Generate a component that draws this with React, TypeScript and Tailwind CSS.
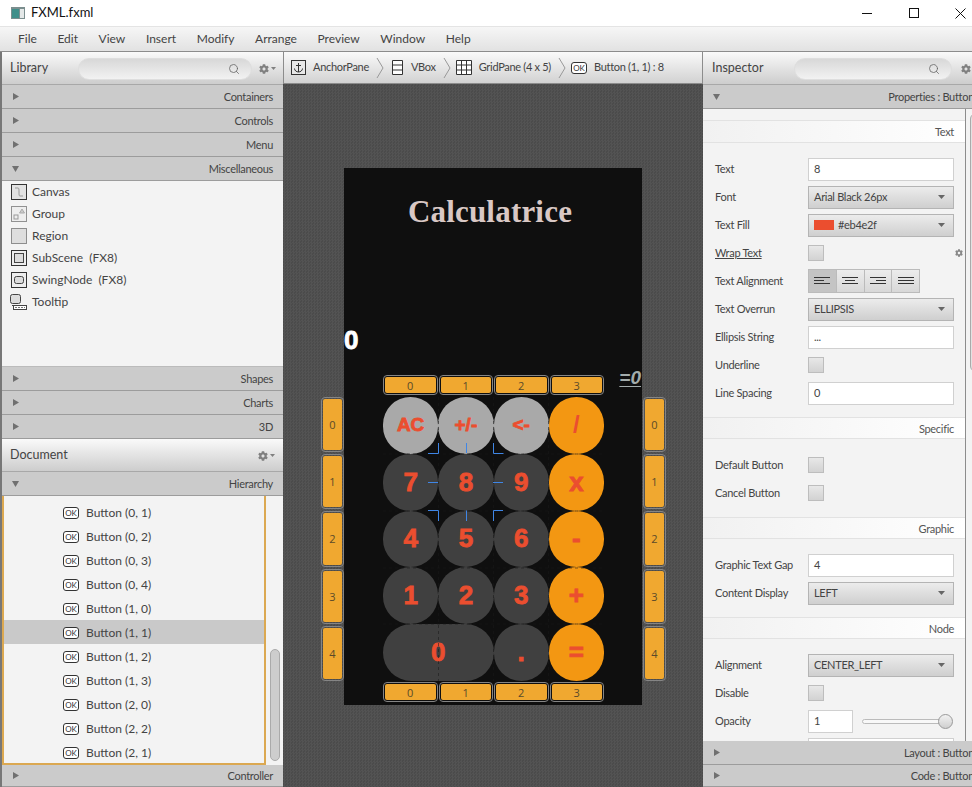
import { Search } from 'lucide-react'
import { FaCog } from 'react-icons/fa'
import type { ReactNode } from 'react'

const buttons = [
  { label: 'AC', kind: 'light', size: 'text-[19px]' },
  { label: '+/-', kind: 'light', size: 'text-[19px]' },
  { label: '<-', kind: 'light', size: 'text-[19px]' },
  { label: '/', kind: 'op', size: 'text-[24px]' },
  { label: '7', kind: 'dark', size: 'text-[26px]' },
  { label: '8', kind: 'dark', size: 'text-[26px]' },
  { label: '9', kind: 'dark', size: 'text-[26px]' },
  { label: 'x', kind: 'op', size: 'text-[26px]' },
  { label: '4', kind: 'dark', size: 'text-[26px]' },
  { label: '5', kind: 'dark', size: 'text-[26px]' },
  { label: '6', kind: 'dark', size: 'text-[26px]' },
  { label: '-', kind: 'op', size: 'text-[26px]' },
  { label: '1', kind: 'dark', size: 'text-[26px]' },
  { label: '2', kind: 'dark', size: 'text-[26px]' },
  { label: '3', kind: 'dark', size: 'text-[26px]' },
  { label: '+', kind: 'op', size: 'text-[26px]' },
  { label: '0', kind: 'wide', size: 'text-[26px]' },
  { label: '.', kind: 'dark', size: 'text-[26px]' },
  { label: '=', kind: 'op', size: 'text-[26px]' },
]

const treeRows = [
  'Button (0, 1)',
  'Button (0, 2)',
  'Button (0, 3)',
  'Button (0, 4)',
  'Button (1, 0)',
  'Button (1, 1)',
  'Button (1, 2)',
  'Button (1, 3)',
  'Button (2, 0)',
  'Button (2, 2)',
  'Button (2, 1)',
]

function Arrow({ open }: { open?: boolean }) {
  return (
    <svg width="7" height="7" viewBox="0 0 7 7" className="shrink-0">
      <path d={open ? 'M0 1h7L3.5 7z' : 'M1 0l6 3.5L1 7z'} fill="#707070" />
    </svg>
  )
}

function AccRow({ title, open, h = 'h-6', pr = 'pr-[10px]' }: { title: ReactNode; open?: boolean; h?: string; pr?: string }) {
  return (
    <div className={'flex shrink-0 items-center justify-between pl-[10px] bg-[#cbcbcb] border-b border-[#9c9c9c] text-[#444] ' + pr + ' ' + h}>
      <Arrow open={open} />
      <span className="whitespace-nowrap pt-[2px]">{title}</span>
    </div>
  )
}

function Gear() {
  return (
    <div className="flex items-center gap-[2px] text-[#808080]">
      <FaCog size={10} />
      <svg width="5" height="3" viewBox="0 0 5 3">
        <path d="M0 0h5L2.5 3z" fill="#808080" />
      </svg>
    </div>
  )
}

function SearchBox({ width }: { width: string }) {
  return (
    <div className={'flex h-[22px] items-center justify-end pr-[11px] rounded-full border border-[#dedede] bg-gradient-to-b from-[#d8d8d8] to-[#f2f2f2] ' + width}>
      <Search size={12} color="#666" strokeWidth={1.6} />
    </div>
  )
}

function PanelHeader({ children }: { children: ReactNode }) {
  return (
    <div className="flex h-[33px] shrink-0 items-center bg-gradient-to-b from-[#fafafa] to-[#cdcdcd] border-b border-[#a8a8a8] pt-[1px] text-[12.5px] tracking-normal text-[#444]">
      {children}
    </div>
  )
}

function OkIcon() {
  return (
    <span className="flex h-[12px] w-[16px] shrink-0 items-center justify-center rounded-[3px] border border-[#333] bg-white text-[8px] leading-none tracking-normal text-[#333]">
      OK
    </span>
  )
}

function LibIcon({ name }: { name: string }) {
  if (name === 'Canvas')
    return (
      <svg width="16" height="16" viewBox="0 0 16 16">
        <rect x="0.5" y="0.5" width="15" height="15" fill="#e2e2e2" stroke="#333" />
        <path d="M4 4h3c1 0 1 1 1 4s0 4 1 4h3" fill="none" stroke="#999" />
      </svg>
    )
  if (name === 'Group')
    return (
      <svg width="16" height="16" viewBox="0 0 16 16">
        <rect x="0.5" y="0.5" width="15" height="15" fill="#eee" stroke="#333" strokeDasharray="1 1" />
        <rect x="3" y="9" width="4" height="4" fill="none" stroke="#999" />
        <path d="M8.5 7l2.5-4 2.5 4z" fill="#ccc" stroke="#aaa" />
      </svg>
    )
  if (name === 'Region')
    return (
      <svg width="16" height="16" viewBox="0 0 16 16">
        <rect x="0.5" y="0.5" width="15" height="15" fill="#dedede" stroke="#333" strokeDasharray="1 1" />
      </svg>
    )
  if (name === 'SubScene')
    return (
      <svg width="16" height="16" viewBox="0 0 16 16">
        <rect x="0.5" y="0.5" width="15" height="15" fill="#eee" stroke="#333" />
        <rect x="3.5" y="3.5" width="9" height="9" fill="#ddd" stroke="#444" />
      </svg>
    )
  if (name === 'SwingNode')
    return (
      <svg width="16" height="16" viewBox="0 0 16 16">
        <rect x="0.5" y="0.5" width="15" height="15" fill="#eee" stroke="#333" />
        <rect x="3.5" y="4.5" width="9" height="7" rx="2" fill="#ddd" stroke="#444" />
      </svg>
    )
  return (
    <svg width="17" height="16" viewBox="0 0 17 16">
      <rect x="0.5" y="0.5" width="10" height="9" rx="2" fill="#ddd" stroke="#444" />
      <path d="M2 11.5h8" stroke="#444" />
      <rect x="3.5" y="11.5" width="13" height="4" fill="#fff" stroke="#444" />
      <path d="M5 13.5h10" stroke="#777" strokeDasharray="2 1" />
    </svg>
  )
}

function LibRow({ name, extra }: { name: string; extra?: string }) {
  return (
    <div className="flex h-[22px] items-center gap-[5px] pl-[8px] text-[12px] tracking-normal text-[#444]">
      <span className="flex w-[17px] justify-center">
        <LibIcon name={name} />
      </span>
      <span className="whitespace-pre">
        {name}
        {extra ? '  ' + extra : ''}
      </span>
    </div>
  )
}

function Chevron() {
  return (
    <svg width="8" height="22" viewBox="0 0 8 22" className="shrink-0">
      <path d="M1 1l6 10-6 10" fill="none" stroke="#999" />
    </svg>
  )
}

function SectionHead({ title, h = 'h-[22px]' }: { title: string; h?: string }) {
  return (
    <div className={'flex items-center justify-end pr-[11px] pt-[2px] border-y border-[#e2e2e2] bg-gradient-to-r from-[#f1f1f1] to-white text-[#555] ' + h}>
      {title}
    </div>
  )
}

function Row({ label, underline, children }: { label: string; underline?: boolean; children: ReactNode }) {
  return (
    <div className="flex h-7 items-center pl-[12px] text-[#444]">
      <span className={'w-[93px] shrink-0 whitespace-nowrap ' + (underline ? 'underline' : '')}>{label}</span>
      {children}
    </div>
  )
}

function Field({ value, width = 'w-[146px]' }: { value: string; width?: string }) {
  return (
    <div className={'flex h-[23px] items-center border border-[#d0d0d0] bg-white pl-[5px] text-[#444] ' + width}>{value}</div>
  )
}

function Combo({ children }: { children: ReactNode }) {
  return (
    <div className="flex h-[23px] w-[146px] items-center justify-between border border-[#b4b4b4] bg-gradient-to-b from-[#ececec] to-[#cfcfcf] pl-[5px] pr-[8px] text-[#444]">
      <span className="flex items-center gap-[4px]">{children}</span>
      <svg width="7" height="4" viewBox="0 0 7 4">
        <path d="M0 0h7L3.5 4z" fill="#666" />
      </svg>
    </div>
  )
}

function Check() {
  return <div className="h-4 w-4 border border-[#bdbdbd] bg-gradient-to-b from-[#e8e8e8] to-[#d2d2d2]" />
}

function AlignIcon({ lines }: { lines: [number, number][] }) {
  return (
    <svg width="16" height="8" viewBox="0 0 16 8">
      {lines.map(([x, w], i) => (
        <rect key={i} x={x} y={i * 3} width={w} height="1" fill="#333" />
      ))}
    </svg>
  )
}

function RulerCell({ label }: { label: number }) {
  return (
    <div className="flex items-center justify-center rounded-[4px] border border-[#858585] bg-[#f0a830] bg-clip-content p-[1px] font-['Open_Sans',sans-serif] text-[11px] leading-none tracking-normal text-[#5a4a2a]">
      {label}
    </div>
  )
}

function Calculator() {
  return (
    <div className="flex h-[537px] w-[298px] flex-col bg-[#0f0f0f] tracking-normal">
      <div className="flex h-[86px] shrink-0 items-center justify-center pr-[6px] pt-[2px] font-['Liberation_Serif',serif] text-[31px] font-bold tracking-[0.2px] text-[#d9c8c5]">
        Calculatrice
      </div>
      <div className="mt-[71px] flex h-[30px] shrink-0 items-center font-['Liberation_Sans',sans-serif] text-[26px] font-bold text-white [-webkit-text-stroke:0.8px_white]">
        0
      </div>
      <div className="flex h-[42px] shrink-0 justify-end pr-[1px] pt-[12px] font-['Liberation_Sans',sans-serif] text-[19px] leading-[22px] font-bold italic text-[#a3acac]">
        <span className="underline underline-offset-2">=0</span>
      </div>
      <div className="relative ml-[39px] h-[284px] w-[221px] shrink-0">
        <div className="grid h-full w-full grid-cols-4 grid-rows-5">
          {buttons.map((b) => (
            <div
              key={b.label}
              className={
                "flex items-center justify-center rounded-full font-['Liberation_Sans',sans-serif] font-bold text-[#eb4e2f] " +
                (b.label === '/' ? '' : '[-webkit-text-stroke:0.8px_#eb4e2f] ') +
                b.size +
                ' ' +
                (b.kind === 'light'
                  ? 'bg-[#a9a9a9]'
                  : b.kind === 'op'
                    ? 'bg-[#f39712]'
                    : b.kind === 'wide'
                      ? 'col-span-2 bg-[#404040]'
                      : 'bg-[#404040]')
              }
            >
              {b.label}
            </div>
          ))}
        </div>

        {/* dashed grid lines of the GridPane */}
        <svg width="221" height="284" viewBox="0 0 221 284" className="absolute left-0 top-0" fill="none" stroke="#1a1a1a" strokeOpacity="0.55" strokeDasharray="3 3">
          <path d="M55.500 0v284M110.500 0v284M165.500 0v284M0 57h221M0 114h221M0 171h221M0 227h221" />
        </svg>

        {/* selection handles */}
        <svg width="76" height="78" viewBox="0 0 76 78" className="absolute left-[45px] top-[46px]" fill="none" stroke="#3f86e6">
          <path d="M0 10.5h10.5V0M38.5 0v10M65.5 0v10.500h10M0 39.500h10M65 39.500h10M0 67.500h10.500V78M38.500 67.500V78M75 67.500H65.500V78" />
        </svg>

        <div className="absolute left-0 top-[-22px] grid h-[20px] w-[221px] grid-cols-4 gap-[1px]">
          {[0, 1, 2, 3].map((n) => (
            <RulerCell key={n} label={n} />
          ))}
        </div>
        <div className="absolute bottom-[-21px] left-0 grid h-[20px] w-[221px] grid-cols-4 gap-[1px]">
          {[0, 1, 2, 3].map((n) => (
            <RulerCell key={n} label={n} />
          ))}
        </div>
        <div className="absolute left-[-62px] top-0 grid h-[284px] w-[23px] grid-rows-5 gap-[2px]">
          {[0, 1, 2, 3, 4].map((n) => (
            <RulerCell key={n} label={n} />
          ))}
        </div>
        <div className="absolute right-[-62px] top-0 grid h-[284px] w-[23px] grid-rows-5 gap-[2px]">
          {[0, 1, 2, 3, 4].map((n) => (
            <RulerCell key={n} label={n} />
          ))}
        </div>
      </div>
    </div>
  )
}

export default function App() {
  return (
    <div className="flex h-[787px] w-[972px] flex-col overflow-hidden bg-white font-['Lato','Open_Sans',sans-serif] text-[11px] tracking-[-0.3px] text-[#333]">
      {/* title bar */}
      <div className="flex h-[27px] shrink-0 items-center border-b border-[#e4e4e4] bg-white pl-[11px] text-[13px] tracking-normal text-[#111]">
        <svg width="14" height="12" viewBox="0 0 14 12" className="mr-[6px]">
          <rect width="14" height="12" fill="#7b8e8e" />
          <rect x="1" y="2" width="7" height="9" fill="#3f8f8a" />
          <rect x="9" y="2" width="4" height="9" fill="#e4e8e8" />
        </svg>
        <span>FXML.fxml</span>
        <div className="ml-auto flex items-center pr-[6px]">
          <svg width="11" height="11" viewBox="0 0 11 11" className="mr-[36px]">
            <path d="M0 5.500h10" stroke="#111" />
          </svg>
          <svg width="11" height="11" viewBox="0 0 11 11" className="mr-[35px]">
            <rect x="0.500" y="0.500" width="9" height="9" fill="none" stroke="#111" />
          </svg>
          <svg width="11" height="11" viewBox="0 0 11 11">
            <path d="M0.500 0.500l10 10M10.500 0.500l-10 10" stroke="#111" />
          </svg>
        </div>
      </div>

      {/* menu bar */}
      <div className="flex h-[25px] shrink-0 items-center gap-[20.6px] border-b border-[#8c8c8c] bg-gradient-to-b from-[#f6f6f6] to-[#e2e2e2] pl-[18px] text-[12px] tracking-normal text-[#444]">
        {['File', 'Edit', 'View', 'Insert', 'Modify', 'Arrange', 'Preview', 'Window', 'Help'].map((m) => (
          <span key={m}>{m}</span>
        ))}
      </div>

      <div className="flex min-h-0 flex-1">
        {/* left panels */}
        <div className="flex w-[283px] shrink-0 flex-col border-l-2 border-[#777] bg-[#f3f3f3]">
          <PanelHeader>
            <span className="ml-[8px] w-[68px]">Library</span>
            <SearchBox width="w-[174px]" />
            <span className="ml-[7px]">
              <Gear />
            </span>
          </PanelHeader>
          <AccRow title="Containers" />
          <AccRow title="Controls" />
          <AccRow title="Menu" />
          <AccRow title="Miscellaneous" open />
          <div className="h-[186px] shrink-0 border-b border-[#bbb]">
            <LibRow name="Canvas" />
            <LibRow name="Group" />
            <LibRow name="Region" />
            <LibRow name="SubScene" extra="(FX8)" />
            <LibRow name="SwingNode" extra="(FX8)" />
            <LibRow name="Tooltip" />
          </div>
          <AccRow title="Shapes" />
          <AccRow title="Charts" />
          <AccRow title="3D" />
          <PanelHeader>
            <span className="ml-[8px]">Document</span>
            <span className="ml-auto mr-[8px]">
              <Gear />
            </span>
          </PanelHeader>
          <AccRow title="Hierarchy" open />
          <div className="relative flex h-[269px] shrink-0">
            <div className="h-full w-[264px] overflow-hidden border-x-2 border-b-2 border-[#dba851] pt-[4px] text-[12px] tracking-normal">
              {treeRows.map((t) => (
                <div
                  key={t}
                  className={
                    'flex h-6 items-center gap-[7px] pl-[59px] pt-[1px] text-[#444] ' +
                    (t === 'Button (1, 1)' ? 'bg-[#c9c9c9]' : '')
                  }
                >
                  <OkIcon />
                  <span>{t}</span>
                </div>
              ))}
            </div>
            <div className="absolute bottom-[4px] right-[3px] h-[112px] w-[10px] rounded-full border border-[#aaa] bg-[#cdcdcd]" />
          </div>
          <AccRow title="Controller" h="h-[22px]" />
        </div>

        {/* center */}
        <div className="flex w-[420px] shrink-0 flex-col">
          <div className="flex h-[32px] shrink-0 items-center gap-[7px] whitespace-nowrap border-x border-b border-[#8c8c8c] bg-gradient-to-b from-[#fafafa] to-[#d2d2d2] pl-[7px] text-[#444]">
            <svg width="15" height="15" viewBox="0 0 15 15" className="shrink-0">
              <rect x="0.500" y="0.500" width="14" height="14" fill="#e8e8e8" stroke="#333" />
              <path d="M7.500 3v9M5 5.500h5M3.500 8.500c0 2 2 3.500 4 3.500s4-1.500 4-3.500" fill="none" stroke="#333" />
            </svg>
            <span>AnchorPane</span>
            <Chevron />
            <svg width="11" height="15" viewBox="0 0 11 15" className="ml-[1px] mr-[1px] shrink-0">
              <path d="M0.500 0.500h10v14h-10zM0.500 5h10M0.500 10h10" fill="#fff" stroke="#333" />
            </svg>
            <span>VBox</span>
            <Chevron />
            <svg width="16" height="15" viewBox="0 0 16 15" className="ml-[-2px] shrink-0">
              <path d="M0.500 0.500h15v14h-15zM0.500 5h15M0.500 10h15M5.500 0.500v14M10.500 0.500v14" fill="#fff" stroke="#333" />
            </svg>
            <span>GridPane (4 x 5)</span>
            <Chevron />
            <span className="ml-[-2px]">
              <OkIcon />
            </span>
            <span>Button (1, 1) : 8</span>
          </div>
          <div className="min-h-0 flex-1 bg-[repeating-conic-gradient(#535353_0%_25%,#4b4b4b_0%_50%)] bg-[length:3px_3px] pl-[61px] pt-[84px]">
            <Calculator />
          </div>
        </div>

        {/* inspector */}
        <div className="flex min-w-0 flex-1 flex-col overflow-hidden bg-[#f3f3f3]">
          <div className="flex h-full w-[289px] flex-col">
            <PanelHeader>
              <span className="ml-[9px] w-[82px]">Inspector</span>
              <SearchBox width="w-[158px]" />
              <span className="ml-[9px]">
                <Gear />
              </span>
            </PanelHeader>
            <AccRow title="Properties : Button" open pr="pr-[18px]" />
            <div className="relative h-[632px] shrink-0 overflow-hidden">
              <div className="w-[263px] border-r border-[#8c8c8c] pt-[11px]">
                <SectionHead title="Text" h="h-[23px]" />
                <div className="pb-[10px] pt-[12px]">
                  <Row label="Text">
                    <Field value="8" />
                  </Row>
                  <Row label="Font">
                    <Combo>Arial Black 26px</Combo>
                  </Row>
                  <Row label="Text Fill">
                    <Combo>
                      <span className="h-[10px] w-[20px] bg-[#eb4e2f]" />
                      #eb4e2f
                    </Combo>
                  </Row>
                  <Row label="Wrap Text" underline>
                    <Check />
                    <span className="ml-auto mr-[2px] text-[#888]">
                      <FaCog size={8} />
                    </span>
                  </Row>
                  <Row label="Text Alignment">
                    <div className="flex h-6 w-[112px] border border-[#bbb] bg-gradient-to-b from-[#ececec] to-[#d8d8d8]">
                      <div className="flex flex-1 items-center justify-center border-r border-[#bbb] bg-[#c4c4c4]">
                        <AlignIcon lines={[[0, 16], [0, 10], [0, 16]]} />
                      </div>
                      <div className="flex flex-1 items-center justify-center border-r border-[#bbb]">
                        <AlignIcon lines={[[0, 16], [3, 10], [0, 16]]} />
                      </div>
                      <div className="flex flex-1 items-center justify-center border-r border-[#bbb]">
                        <AlignIcon lines={[[0, 16], [6, 10], [0, 16]]} />
                      </div>
                      <div className="flex flex-1 items-center justify-center">
                        <AlignIcon lines={[[0, 16], [0, 16], [0, 16]]} />
                      </div>
                    </div>
                  </Row>
                  <Row label="Text Overrun">
                    <Combo>ELLIPSIS</Combo>
                  </Row>
                  <Row label="Ellipsis String">
                    <Field value="..." />
                  </Row>
                  <Row label="Underline">
                    <Check />
                  </Row>
                  <Row label="Line Spacing">
                    <Field value="0" />
                  </Row>
                </div>
                <SectionHead title="Specific" />
                <div className="pb-[10px] pt-[12px]">
                  <Row label="Default Button">
                    <Check />
                  </Row>
                  <Row label="Cancel Button">
                    <Check />
                  </Row>
                </div>
                <SectionHead title="Graphic" />
                <div className="pb-[10px] pt-[12px]">
                  <Row label="Graphic Text Gap">
                    <Field value="4" />
                  </Row>
                  <Row label="Content Display">
                    <Combo>LEFT</Combo>
                  </Row>
                </div>
                <SectionHead title="Node" />
                <div className="pb-[10px] pt-[12px]">
                  <Row label="Alignment">
                    <Combo>CENTER_LEFT</Combo>
                  </Row>
                  <Row label="Disable">
                    <Check />
                  </Row>
                  <Row label="Opacity">
                    <Field value="1" width="w-[45px]" />
                    <div className="relative ml-[9px] h-[5px] w-[84px] rounded-full border border-[#bbb] bg-[#f8f8f8]">
                      <div className="absolute right-[-8px] top-[-6px] h-[15px] w-[15px] rounded-full border border-[#999] bg-gradient-to-b from-[#f2f2f2] to-[#cfcfcf]" />
                    </div>
                  </Row>
                  <Row label="">
                    <Field value="" />
                  </Row>
                </div>
              </div>
              <div className="absolute left-[267px] top-[4px] h-[259px] w-[12px] rounded-full border border-[#aaa] bg-[#e2e2e2]" />
            </div>
            <AccRow title="Layout : Button" pr="pr-[18px]" />
            <AccRow title="Code : Button" h="h-[22px]" pr="pr-[18px]" />
          </div>
        </div>
      </div>
    </div>
  )
}
